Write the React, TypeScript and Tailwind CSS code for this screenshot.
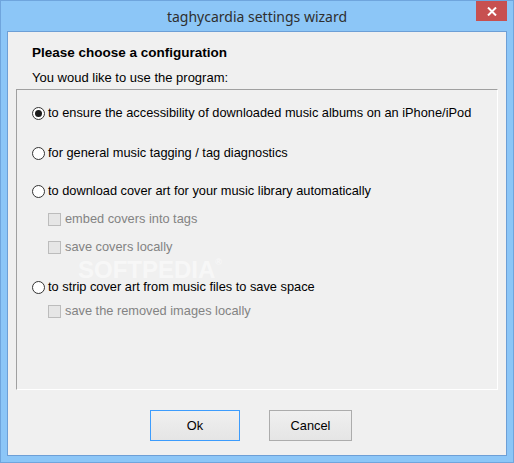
import React from "react";

const UI = { fontFamily: '"Liberation Sans", Arial, sans-serif' };

function Radio({ checked }: { checked?: boolean }) {
  return (
    <span className="w-[13px] h-[13px] rounded-full border border-[#333333] bg-white flex items-center justify-center shrink-0">
      {checked && <span className="w-[7px] h-[7px] rounded-full bg-[#1a1a1a]" />}
    </span>
  );
}

function Check() {
  return <span className="w-[13px] h-[13px] border border-[#bcbcbc] bg-[#e6e6e6] shrink-0" />;
}

function RadioRow({ label, checked, className }: { label: string; checked?: boolean; className?: string }) {
  return (
    <div className={"h-[20px] flex items-center gap-[3px] text-[12.8px] text-black " + (className ?? "")}>
      <Radio checked={checked} />
      <span>{label}</span>
    </div>
  );
}

function CheckRow({ label, className }: { label: string; className?: string }) {
  return (
    <div className={"h-[20px] flex items-center gap-[4px] pl-[16px] text-[12.8px] text-[#838383] " + (className ?? "")}>
      <Check />
      <span>{label}</span>
    </div>
  );
}

export default function App() {
  return (
    <div className="w-[514px] h-[463px] bg-[#8cc6f7] border border-[#6fa5dd] flex flex-col relative overflow-hidden" style={UI}>
      <div className="h-[30px] flex items-center justify-center relative">
        <span className="text-[14px] text-[#2f2f2f]" style={{ fontFamily: '"Noto Sans", "Open Sans", sans-serif' }}>
          taghycardia settings wizard
        </span>
        <div className="absolute top-0 right-[6px] w-[31px] h-[20px] bg-[#c75050] flex items-center justify-center">
          <svg width="10" height="9" viewBox="0 0 10 9">
            <path d="M1 0.5 L9 8.5 M9 0.5 L1 8.5" stroke="#ffffff" strokeWidth="2" />
          </svg>
        </div>
      </div>
      <div className="mx-[6px] mb-[6px] flex-1 border border-[#6d9fd6] bg-[#f0f0f0] flex flex-col relative">
        <div className="pl-[24px] pt-[13px] h-[16px] box-content flex items-center text-[13.5px] font-bold text-black">
          Please choose a configuration
        </div>
        <div className="pl-[24px] mt-[9px] h-[16px] flex items-center text-[13px] text-black">
          You woud like to use the program:
        </div>
        <div className="mx-[8px] mt-[3px] h-[301px] border-t border-l border-[#a0a0a0] border-r border-r-white border-b border-b-white flex flex-col pl-[15px]">
          <RadioRow className="mt-[13px]" checked label="to ensure the accessibility of downloaded music albums on an iPhone/iPod" />
          <RadioRow className="mt-[20px]" label="for general music tagging / tag diagnostics" />
          <RadioRow className="mt-[18px]" label="to download cover art for your music library automatically" />
          <CheckRow className="mt-[8px]" label="embed covers into tags" />
          <CheckRow className="mt-[8px]" label="save covers locally" />
          <RadioRow className="mt-[20px]" label="to strip cover art from music files to save space" />
          <CheckRow className="mt-[4px]" label="save the removed images locally" />
        </div>
        <div className="flex pl-[142px] mt-[20px] gap-[29px] text-[12.8px] text-black">
          <button className="w-[90px] h-[31px] border border-[#3c9cfd] bg-gradient-to-b from-[#f0f0f0] to-[#e5e5e5] flex items-center justify-center">
            Ok
          </button>
          <button className="w-[83px] h-[31px] border border-[#acacac] bg-gradient-to-b from-[#f0f0f0] to-[#e5e5e5] flex items-center justify-center">
            Cancel
          </button>
        </div>
        <div className="absolute left-[70px] top-[226px] leading-none text-[24px] font-bold text-white opacity-50 pointer-events-none">
          SOFTPEDIA<span className="text-[9px] align-top">®</span>
        </div>
      </div>
    </div>
  );
}
